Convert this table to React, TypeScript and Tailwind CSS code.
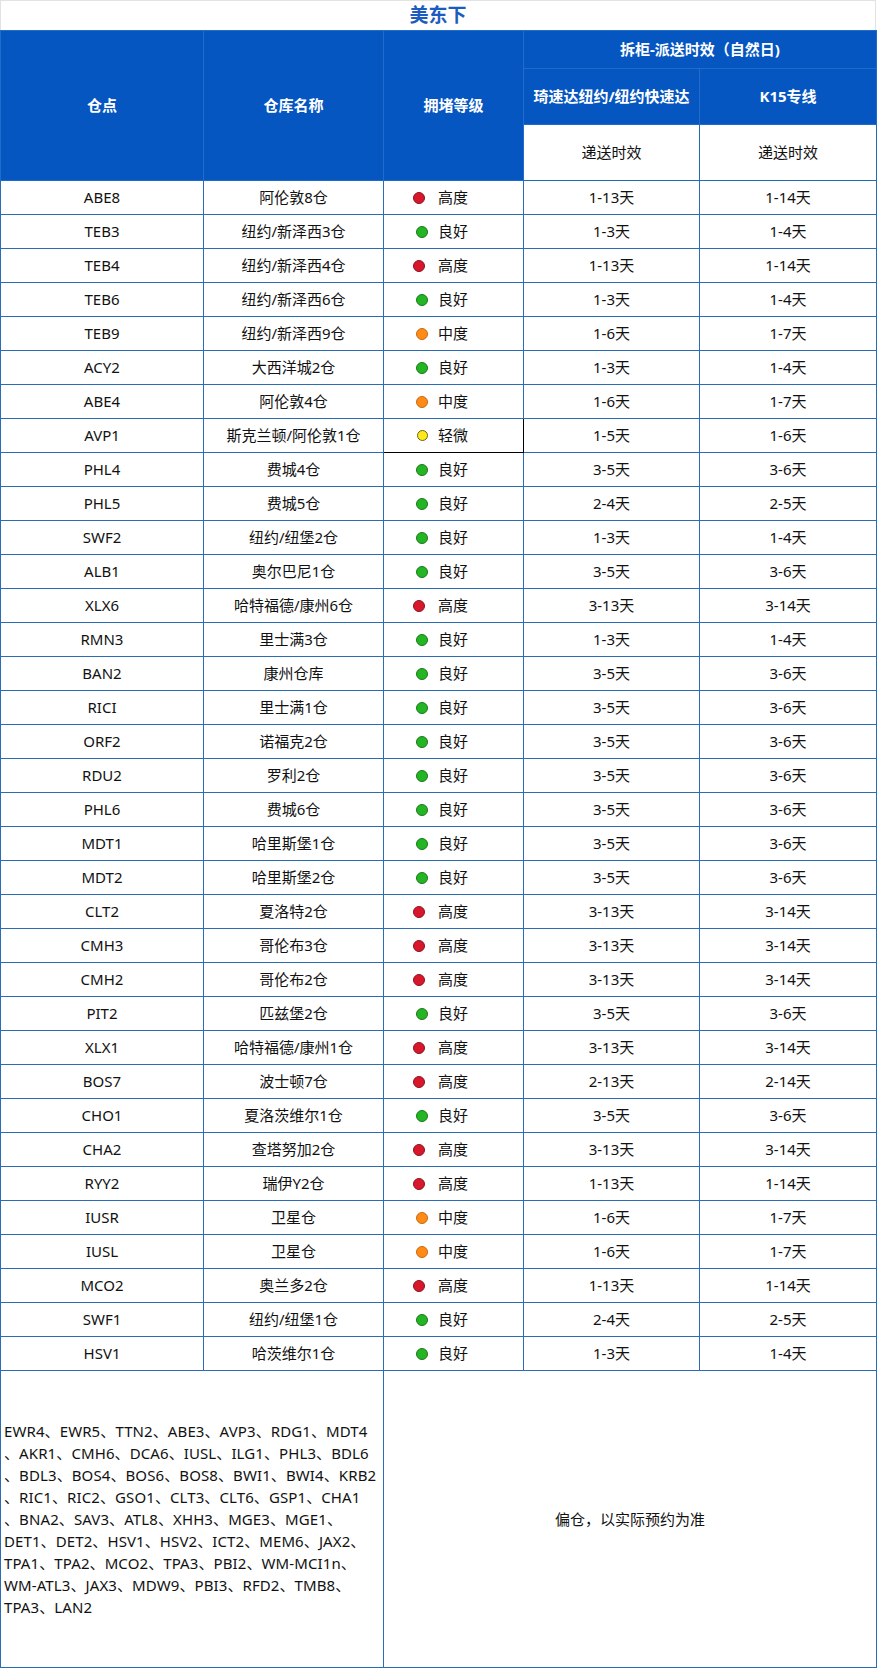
import React from "react";

type Level = "high" | "mid" | "low" | "good";

const rows: [string, string, Level, string, string][] = [
  ["ABE8", "阿伦敦8仓", "high", "1-13天", "1-14天"],
  ["TEB3", "纽约/新泽西3仓", "good", "1-3天", "1-4天"],
  ["TEB4", "纽约/新泽西4仓", "high", "1-13天", "1-14天"],
  ["TEB6", "纽约/新泽西6仓", "good", "1-3天", "1-4天"],
  ["TEB9", "纽约/新泽西9仓", "mid", "1-6天", "1-7天"],
  ["ACY2", "大西洋城2仓", "good", "1-3天", "1-4天"],
  ["ABE4", "阿伦敦4仓", "mid", "1-6天", "1-7天"],
  ["AVP1", "斯克兰顿/阿伦敦1仓", "low", "1-5天", "1-6天"],
  ["PHL4", "费城4仓", "good", "3-5天", "3-6天"],
  ["PHL5", "费城5仓", "good", "2-4天", "2-5天"],
  ["SWF2", "纽约/纽堡2仓", "good", "1-3天", "1-4天"],
  ["ALB1", "奥尔巴尼1仓", "good", "3-5天", "3-6天"],
  ["XLX6", "哈特福德/康州6仓", "high", "3-13天", "3-14天"],
  ["RMN3", "里士满3仓", "good", "1-3天", "1-4天"],
  ["BAN2", "康州仓库", "good", "3-5天", "3-6天"],
  ["RICI", "里士满1仓", "good", "3-5天", "3-6天"],
  ["ORF2", "诺福克2仓", "good", "3-5天", "3-6天"],
  ["RDU2", "罗利2仓", "good", "3-5天", "3-6天"],
  ["PHL6", "费城6仓", "good", "3-5天", "3-6天"],
  ["MDT1", "哈里斯堡1仓", "good", "3-5天", "3-6天"],
  ["MDT2", "哈里斯堡2仓", "good", "3-5天", "3-6天"],
  ["CLT2", "夏洛特2仓", "high", "3-13天", "3-14天"],
  ["CMH3", "哥伦布3仓", "high", "3-13天", "3-14天"],
  ["CMH2", "哥伦布2仓", "high", "3-13天", "3-14天"],
  ["PIT2", "匹兹堡2仓", "good", "3-5天", "3-6天"],
  ["XLX1", "哈特福德/康州1仓", "high", "3-13天", "3-14天"],
  ["BOS7", "波士顿7仓", "high", "2-13天", "2-14天"],
  ["CHO1", "夏洛茨维尔1仓", "good", "3-5天", "3-6天"],
  ["CHA2", "查塔努加2仓", "high", "3-13天", "3-14天"],
  ["RYY2", "瑞伊Y2仓", "high", "1-13天", "1-14天"],
  ["IUSR", "卫星仓", "mid", "1-6天", "1-7天"],
  ["IUSL", "卫星仓", "mid", "1-6天", "1-7天"],
  ["MCO2", "奥兰多2仓", "high", "1-13天", "1-14天"],
  ["SWF1", "纽约/纽堡1仓", "good", "2-4天", "2-5天"],
  ["HSV1", "哈茨维尔1仓", "good", "1-3天", "1-4天"],
];

const label: Record<Level, string> = {
  high: "高度",
  mid: "中度",
  low: "轻微",
  good: "良好",
};

function Dot({ level }: { level: Level }) {
  if (level === "high")
    return <span className="ml-[29px] block h-[12px] w-[12px] rounded-full border border-[#8c1222] bg-[#d8172b]" />;
  if (level === "mid")
    return <span className="ml-[32px] block h-[12px] w-[12px] rounded-full border border-[#c96a12] bg-[#ff8a16]" />;
  if (level === "low")
    return <span className="ml-[33px] block h-[11px] w-[11px] rounded-full border border-[#6e6410] bg-[#fde91c]" />;
  return <span className="ml-[32px] block h-[12px] w-[12px] rounded-full border border-[#1b7a1b] bg-[#23b523]" />;
}

const bottomLines = [
  "EWR4、EWR5、TTN2、ABE3、AVP3、RDG1、MDT4",
  "、AKR1、CMH6、DCA6、IUSL、ILG1、PHL3、BDL6",
  "、BDL3、BOS4、BOS6、BOS8、BWI1、BWI4、KRB2",
  "、RIC1、RIC2、GSO1、CLT3、CLT6、GSP1、CHA1",
  "、BNA2、SAV3、ATL8、XHH3、MGE3、MGE1、",
  "DET1、DET2、HSV1、HSV2、ICT2、MEM6、JAX2、",
  "TPA1、TPA2、MCO2、TPA3、PBI2、WM-MCI1n、",
  "WM-ATL3、JAX3、MDW9、PBI3、RFD2、TMB8、",
  "TPA3、LAN2",
];

export default function App() {
  const font = { fontFamily: '"Noto Sans", "Noto Sans CJK SC", sans-serif' };
  return (
    <div className="w-[877px] bg-white" style={font}>
      <div className="flex h-[30px] w-[876px] items-center justify-center border-x border-t border-[#e2e2e2] text-[19px] font-bold text-[#1d5cbf]">
        美东下
      </div>
      <table className="w-[876px] table-fixed border-collapse text-[15px] text-[#111]">
        <colgroup>
          <col className="w-[203px]" />
          <col className="w-[180px]" />
          <col className="w-[140px]" />
          <col className="w-[176px]" />
          <col className="w-[177px]" />
        </colgroup>
        <tbody>
          <tr className="h-[38px]">
            <td rowSpan={3} className="border border-[#1f6dc8] bg-[#0656c1] p-0 text-center font-bold text-white">仓点</td>
            <td rowSpan={3} className="border border-[#1f6dc8] bg-[#0656c1] p-0 text-center font-bold text-white">仓库名称</td>
            <td rowSpan={3} className="border border-[#1f6dc8] bg-[#0656c1] p-0 text-center font-bold text-white">拥堵等级</td>
            <td colSpan={2} className="border border-[#1f6dc8] bg-[#0656c1] p-0 text-center font-bold text-white">拆柜-派送时效（自然日)</td>
          </tr>
          <tr className="h-[56px]">
            <td className="border border-[#1f6dc8] bg-[#0656c1] p-0 text-center font-bold text-white">琦速达纽约/纽约快速达</td>
            <td className="border border-[#1f6dc8] bg-[#0656c1] p-0 text-center font-bold text-white">K15专线</td>
          </tr>
          <tr className="h-[56px]">
            <td className="border border-[#1f6db6] bg-white p-0 text-center">递送时效</td>
            <td className="border border-[#1f6db6] bg-white p-0 text-center">递送时效</td>
          </tr>
          {rows.map(([code, name, level, t1, t2]) => (
            <tr key={code} className="h-[34px]">
              <td className="border border-[#2a6cb6] p-0 text-center">{code}</td>
              <td className="border border-[#2a6cb6] p-0 text-center">{name}</td>
              <td
                className={
                  level === "low"
                    ? "border border-black p-0"
                    : "border border-[#2a6cb6] p-0"
                }
              >
                <div className="flex items-center">
                  <div className="flex w-[54px] items-center">
                    <Dot level={level} />
                  </div>
                  <span>{label[level]}</span>
                </div>
              </td>
              <td className="border border-[#2a6cb6] p-0 text-center">{t1}</td>
              <td className="border border-[#2a6cb6] p-0 text-center">{t2}</td>
            </tr>
          ))}
          <tr className="h-[297px]">
            <td colSpan={2} className="border border-[#2a6cb6] p-0 pl-[3px] align-middle">
              <div className="flex flex-col leading-[22px] tracking-[0.1px]">
                {bottomLines.map((l, i) => (
                  <span key={i} className="whitespace-nowrap">{l}</span>
                ))}
              </div>
            </td>
            <td colSpan={3} className="border border-[#2a6cb6] p-0 text-center align-middle">
              偏仓，以实际预约为准
            </td>
          </tr>
        </tbody>
      </table>
    </div>
  );
}
